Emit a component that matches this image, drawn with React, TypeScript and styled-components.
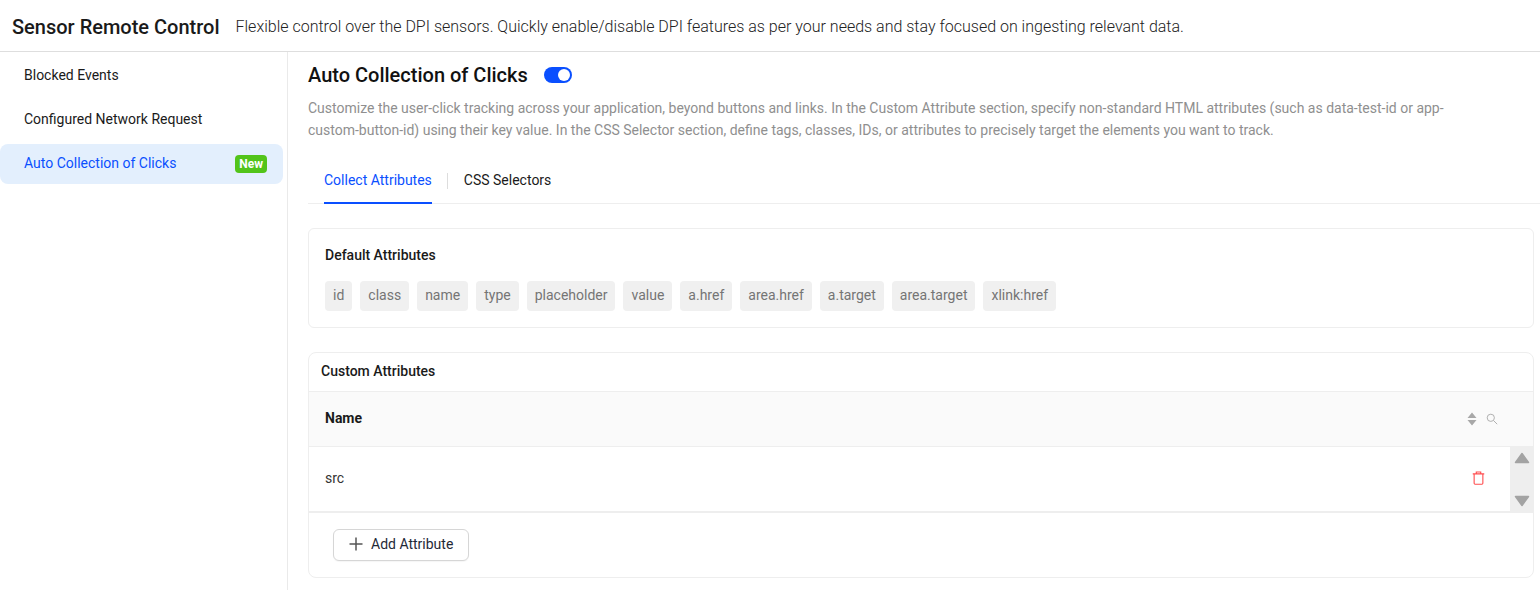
import React from "react";
import styled, { createGlobalStyle } from "styled-components";

const Global = createGlobalStyle`
  html, body { margin: 0; padding: 0; background: #fff; overflow: hidden; }
  body { font-family: Roboto, "Liberation Sans", sans-serif; color: #1a1a1a; }
  * { box-sizing: border-box; }
`;

const Page = styled.div`width: 1540px; height: 590px; display: flex; flex-direction: column; overflow: hidden;`;
const Header = styled.header`height: 52px; flex: none; display: flex; align-items: center; padding: 2px 12px 0; gap: 16px; border-bottom: 1px solid #dedede;`;
const HeaderTitle = styled.h1`margin: 0; font-size: 20px; font-weight: 500; line-height: 28px; color: #1a1a1a;`;
const HeaderText = styled.p`margin: 0; font-size: 16px; font-weight: 300; line-height: 24px; color: #222;`;
const Body = styled.div`flex: 1; display: flex; min-height: 0;`;
const Side = styled.nav`width: 288px; flex: none; border-right: 1px solid #eaeaea; padding: 4px 4px 0 0; display: flex; flex-direction: column; gap: 4px;`;
const SideItem = styled.div<{ $active?: boolean }>`
  height: 40px; display: flex; align-items: center; justify-content: space-between; padding: 0 16px 0 24px;
  font-size: 14px; border-radius: 8px;
  color: ${p => (p.$active ? "#0a4fff" : "#1a1a1a")};
  background: ${p => (p.$active ? "#e3effd" : "transparent")};
`;
const SideLabel = styled.span`line-height: 20px; margin-bottom: 2px;`;
const NewBadge = styled.span`height: 18px; padding: 0 4px; border-radius: 4px; background: #52c41a; color: #fff; font-size: 12px; font-weight: 700; line-height: 18px;`;
const Main = styled.main`flex: 1; min-width: 0; padding: 8px 6px 0 20px;`;
const TitleRow = styled.div`display: flex; align-items: center; gap: 16px; height: 30px;`;
const Title = styled.h2`margin: 0; font-size: 20px; font-weight: 500; line-height: 30px; color: #111;`;
const Toggle = styled.span`width: 28px; height: 16px; border-radius: 8px; background: #0a4fff; display: flex; align-items: center; justify-content: flex-end; padding-right: 2px;`;
const Knob = styled.span`width: 12px; height: 12px; border-radius: 50%; background: #fff;`;
const Desc = styled.p`margin: 7px 0 0; font-size: 14px; line-height: 22px; color: #8f8f8f; max-width: 1160px;`;
const Tabs = styled.div`margin-top: 9px; margin-right: -6px; height: 54px; display: flex; align-items: center; padding-left: 16px; border-bottom: 1px solid #eee;`;
const Tab = styled.div<{ $active?: boolean }>`
  height: 54px; display: flex; align-items: center; padding-top: 8px; font-size: 14px; line-height: 20px;
  color: ${p => (p.$active ? "#0a4fff" : "#1a1a1a")};
  border-bottom: 2px solid ${p => (p.$active ? "#0a4fff" : "transparent")};
  margin-bottom: -1px;
`;
const TabSep = styled.span`width: 1px; height: 16px; background: #ddd; margin: 9px 16px 0 15px;`;
const DefaultCard = styled.section`margin-top: 24px; height: 100px; border: 1px solid #eee; border-radius: 6px; padding: 16px;`;
const CardHeading = styled.h3`margin: 0; font-size: 14px; font-weight: 500; line-height: 20px; color: #1a1a1a;`;
const Chips = styled.div`margin-top: 16px; display: flex; gap: 8px;`;
const Chip = styled.span`height: 30px; padding: 0 8px; border-radius: 4px; background: #f0f0f0; color: #757575; font-size: 14px; line-height: 28px;`;
const CustomCard = styled.section`margin-top: 24px; height: 226px; border: 1px solid #eee; border-radius: 8px; overflow: hidden;`;
const CustomHead = styled.div`height: 38px; padding: 0 12px 2px; display: flex; align-items: center;`;
const TableHead = styled.div`height: 56px; background: #fafafa; border-top: 1px solid #eee; border-bottom: 1px solid #eee; display: flex; align-items: center; justify-content: space-between; padding: 0 35px 0 16px;`;
const NameCol = styled.span`font-size: 14px; font-weight: 700; color: #1a1a1a; padding-bottom: 2px;`;
const HeadIcons = styled.span`display: flex; align-items: center; gap: 9px;`;
const RowWrap = styled.div`display: flex; height: 66px; border-bottom: 2px solid #eee;`;
const Row = styled.div`flex: 1; display: flex; align-items: center; justify-content: space-between; padding: 0 25px 2px 16px; font-size: 14px; color: #333;`;
const Scroll = styled.div`width: 23px; flex: none; background: #eeeeee; display: flex; flex-direction: column; justify-content: space-between; align-items: center; padding: 5px 0 4px;`;
const Footer = styled.div`padding: 16px 24px;`;
const AddBtn = styled.button`
  height: 32px; width: 136px; display: flex; align-items: center; gap: 8px; padding: 0 0 2px 15px;
  background: #fff; border: 1px solid #d6d6d6; border-radius: 6px; font-family: inherit; font-size: 14px; color: #1f2937;
  box-shadow: 0 1px 1px rgba(0,0,0,.04);
`;

const chips = ["id", "class", "name", "type", "placeholder", "value", "a.href", "area.href", "a.target", "area.target", "xlink:href"];

export default function App() {
  return (
    <Page>
      <Global />
      <Header>
        <HeaderTitle>Sensor Remote Control</HeaderTitle>
        <HeaderText>Flexible control over the DPI sensors. Quickly enable/disable DPI features as per your needs and stay focused on ingesting relevant data.</HeaderText>
      </Header>
      <Body>
        <Side>
          <SideItem><SideLabel>Blocked Events</SideLabel></SideItem>
          <SideItem><SideLabel>Configured Network Request</SideLabel></SideItem>
          <SideItem $active><SideLabel>Auto Collection of Clicks</SideLabel><NewBadge>New</NewBadge></SideItem>
        </Side>
        <Main>
          <TitleRow>
            <Title>Auto Collection of Clicks</Title>
            <Toggle><Knob /></Toggle>
          </TitleRow>
          <Desc>Customize the user-click tracking across your application, beyond buttons and links. In the Custom Attribute section, specify non-standard HTML attributes (such as data-test-id or app-custom-button-id) using their key value. In the CSS Selector section, define tags, classes, IDs, or attributes to precisely target the elements you want to track.</Desc>
          <Tabs>
            <Tab $active>Collect Attributes</Tab>
            <TabSep />
            <Tab>CSS Selectors</Tab>
          </Tabs>
          <DefaultCard>
            <CardHeading>Default Attributes</CardHeading>
            <Chips>{chips.map(c => <Chip key={c}>{c}</Chip>)}</Chips>
          </DefaultCard>
          <CustomCard>
            <CustomHead><CardHeading>Custom Attributes</CardHeading></CustomHead>
            <TableHead>
              <NameCol>Name</NameCol>
              <HeadIcons>
                <svg width="10" height="14" viewBox="0 0 10 14"><path d="M5 0.5 9.5 6H.5Z M.5 8H9.5L5 13.5Z" fill="#a8a8a8" /></svg>
                <svg width="12" height="12" viewBox="0 0 12 12" fill="none" stroke="#b0b0b0" strokeWidth="1"><circle cx="4.8" cy="4.8" r="3.6" /><path d="M7.5 7.5 11.2 11.2" /></svg>
              </HeadIcons>
            </TableHead>
            <RowWrap>
              <Row>src
                <svg width="13" height="14" viewBox="0 0 14 15" fill="none" stroke="#ff4d4f" strokeWidth="1.2"><path d="M.8 3.1H13.2M4.6 3.1V1H9.4V3.1M2.3 3.1V13.2A1 1 0 0 0 3.3 14.2H10.7A1 1 0 0 0 11.7 13.2V3.1" /></svg>
              </Row>
              <Scroll>
                <svg width="16" height="12" viewBox="0 0 16 12"><path d="M8 1.5 14.5 10.5H1.5Z" fill="#a3a3a3" stroke="#a3a3a3" strokeWidth="1.5" strokeLinejoin="round" /></svg>
                <svg width="16" height="12" viewBox="0 0 16 12"><path d="M1.5 1.5H14.5L8 10.5Z" fill="#a3a3a3" stroke="#a3a3a3" strokeWidth="1.5" strokeLinejoin="round" /></svg>
              </Scroll>
            </RowWrap>
            <Footer>
              <AddBtn>
                <svg width="14" height="14" viewBox="0 0 14 14" fill="none" stroke="#555" strokeWidth="1.5"><path d="M7 .5V13.5M.5 7H13.5" /></svg>
                Add Attribute
              </AddBtn>
            </Footer>
          </CustomCard>
        </Main>
      </Body>
    </Page>
  );
}
